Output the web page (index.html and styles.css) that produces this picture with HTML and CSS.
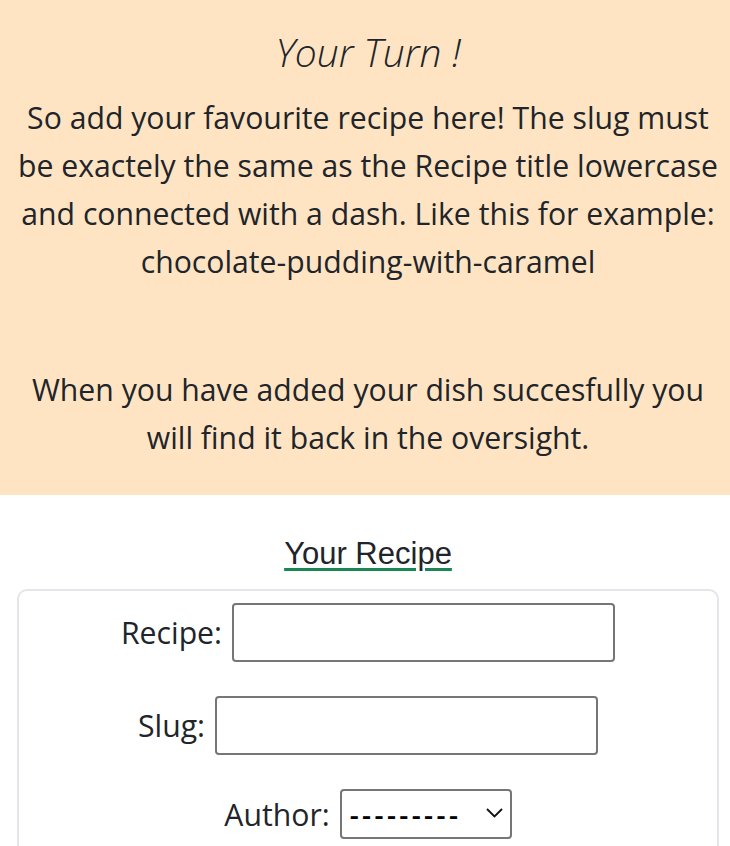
FILE: index.html
```html
<!DOCTYPE html>
<html lang="en">
<head>
<meta charset="utf-8">
<title>Your Turn</title>
<link rel="stylesheet" href="styles.css">
</head>
<body>
<section class="intro">
  <h1 class="intro-title">Your Turn !</h1>
  <p class="intro-text">So add your favourite recipe here! The slug must be exactely the same as the Recipe title lowercase and connected with a dash. Like this for example: chocolate-pudding-with-caramel</p>
  <p class="intro-text intro-text--second">When you have added your dish succesfully you will find it back in the oversight.</p>
</section>
<main class="recipe">
  <h2 class="recipe-title"><span class="recipe-title-text">Your Recipe</span></h2>
  <form class="recipe-card">
    <div class="field">
      <label class="field-label" for="recipe">Recipe:</label>
      <input class="field-input" type="text" id="recipe">
    </div>
    <div class="field">
      <label class="field-label" for="slug">Slug:</label>
      <input class="field-input" type="text" id="slug">
    </div>
    <div class="field">
      <label class="field-label" for="author">Author:</label>
      <span class="select-wrap">
        <select class="field-select" id="author">
          <option>---------</option>
        </select>
        <svg class="select-arrow" width="17" height="10" viewBox="0 0 17 10" aria-hidden="true">
          <path d="M1 1 L8.5 8.5 L16 1" fill="none" stroke="#111" stroke-width="1.8"/>
        </svg>
      </span>
    </div>
  </form>
</main>
</body>
</html>
```
FILE: styles.css
```css
html, body {
  margin: 0;
  padding: 0;
  background: #fff;
  color: #212529;
  font-family: "Open Sans", "Noto Sans", sans-serif;
}

.intro {
  background: #ffe4c4;
  padding: 28px 8px 33px 14px;
  text-align: center;
}

.intro-title {
  margin: 0;
  font-size: 39px;
  line-height: 48px;
  font-weight: 300;
  font-style: italic;
}

.intro-text {
  margin: 18px 0 0;
  font-size: 30.2px;
  line-height: 48px;
  font-weight: 400;
}

.intro-text--second {
  margin-top: 80px;
}

.recipe {
  padding: 0 11px 0 17px;
}

.recipe-title {
  margin: 39px 0 0;
  text-align: center;
  font-family: "Liberation Sans", Arial, sans-serif;
  font-weight: 400;
  font-size: 31px;
  line-height: 40px;
}

.recipe-title-text {
  text-decoration: underline;
  text-decoration-color: #198754;
  text-decoration-thickness: 3px;
  text-underline-offset: 4px;
}

.recipe-card {
  margin: 15px 0 0;
  border: 2px solid #e3e5e8;
  border-bottom: none;
  border-radius: 10px 10px 0 0;
  padding: 12px 0 40px;
  display: flex;
  flex-direction: column;
  align-items: center;
  gap: 34px;
}

.field {
  display: flex;
  align-items: center;
  gap: 10px;
}

.field-label {
  font-size: 30.2px;
}

.field-input {
  box-sizing: border-box;
  width: 383px;
  height: 59px;
  border: 2px solid #767676;
  border-radius: 4px;
  background: #fff;
  font-size: 24px;
  padding: 4px 8px;
}

.select-wrap {
  position: relative;
  display: inline-flex;
}

.field-select {
  appearance: none;
  -webkit-appearance: none;
  box-sizing: border-box;
  width: 172px;
  height: 50px;
  border: 2px solid #767676;
  border-radius: 4px;
  background: #fff;
  color: #000;
  font-family: "Open Sans", sans-serif;
  font-size: 28px;
  font-weight: 600;
  letter-spacing: 3.4px;
  padding: 0 30px 0 8px;
}

.select-arrow {
  position: absolute;
  right: 9px;
  top: 19px;
  pointer-events: none;
}
```
